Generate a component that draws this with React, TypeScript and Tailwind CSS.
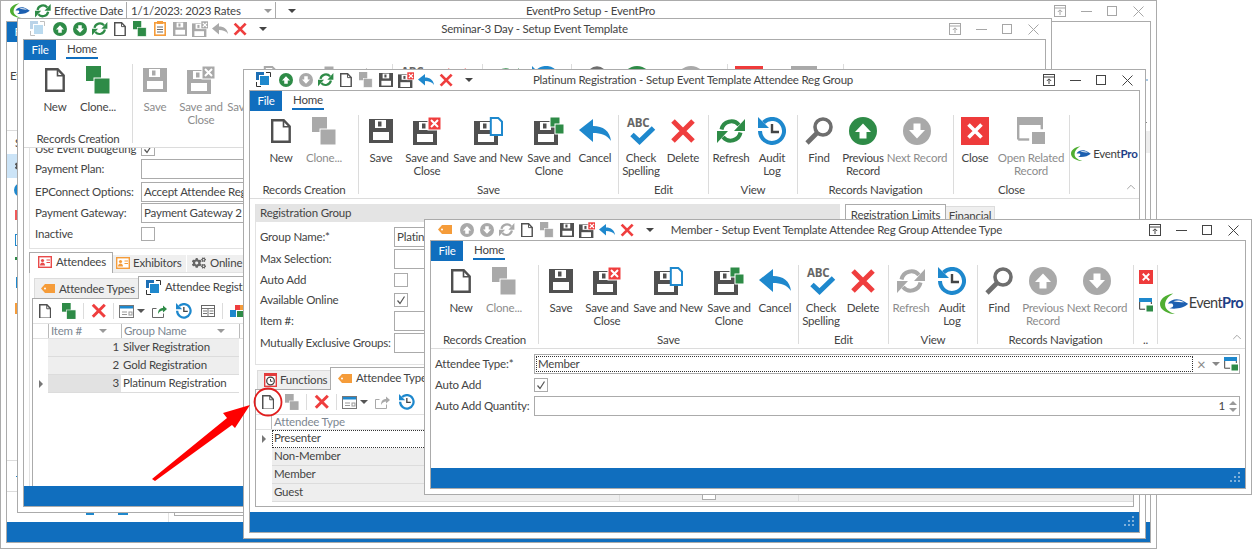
import type { ReactNode } from 'react'
import { FaCogs } from 'react-icons/fa'
import { ChevronUp } from 'lucide-react'

const DARK = '#505050'
const GRAY = '#a9a9a9'
const GREEN = '#2e8b47'
const RED = '#ef3e3e'
const BLUE = '#1e88cd'
const ORANGE = '#f59c3a'

type IconProps = { s?: number; c?: string }

function Svg({ w, h, s = 1, children }: { w: number; h: number; s?: number; children: ReactNode }) {
  return (
    <svg width={w * s} height={h * s} viewBox={`0 0 ${w} ${h}`} className="shrink-0">
      {children}
    </svg>
  )
}

function Doc({ s, c = DARK }: IconProps) {
  return (
    <Svg w={20} h={24} s={s}>
      <path d="M1.2 1.2h11.5l6 6.3v15.3H1.2z" fill="#fff" stroke={c} strokeWidth="2.4" />
      <path d="M12.5 1.2v6.5h6.3" fill="none" stroke={c} strokeWidth="1.6" />
    </Svg>
  )
}

function Clone({ s, c = GREEN }: IconProps) {
  return (
    <Svg w={24} h={28} s={s}>
      <rect x="0" y="0" width="15" height="15" fill={c} />
      <rect x="8" y="12" width="16" height="16" fill={c} stroke="#fff" strokeWidth="1" />
    </Svg>
  )
}

function FloppyG({ c = DARK, x = 0, y = 0 }: { c?: string; x?: number; y?: number }) {
  return (
    <g transform={`translate(${x} ${y})`}>
      <rect width="24" height="24" fill={c} />
      <rect x="6" y="1" width="11" height="8" fill="#fff" />
      <rect x="9" y="2.5" width="3.5" height="5" fill={c} />
      <rect x="4" y="13" width="16" height="8" fill="#fff" />
    </g>
  )
}

function Save({ s, c = DARK }: IconProps) {
  return (
    <Svg w={24} h={24} s={s}>
      <FloppyG c={c} />
    </Svg>
  )
}

function SaveClose({ s, c = DARK, mark = RED }: IconProps & { mark?: string }) {
  return (
    <Svg w={28} h={28} s={s}>
      <FloppyG c={c} y={4} />
      <rect x="15" y="0" width="13" height="13" fill={mark} stroke="#fff" strokeWidth="1" />
      <path d="M18 3l7 7M25 3l-7 7" stroke="#fff" strokeWidth="2" />
    </Svg>
  )
}

function SaveNew({ s, c = DARK, mark = BLUE }: IconProps & { mark?: string }) {
  return (
    <Svg w={29} h={28} s={s}>
      <FloppyG c={c} y={4} />
      <path d="M16.8 1h7.500l3.700 3.700v13.300H16.800z" fill="#fff" stroke={mark} strokeWidth="2" />
    </Svg>
  )
}

function SaveClone({ s, c = DARK, mark = GREEN }: IconProps & { mark?: string }) {
  return (
    <Svg w={30} h={28} s={s}>
      <FloppyG c={c} y={4} />
      <rect x="16" y="0" width="10" height="10" fill={mark} stroke="#fff" strokeWidth="1" />
      <rect x="21" y="7" width="9" height="10" fill={mark} stroke="#fff" strokeWidth="1" />
    </Svg>
  )
}

function Undo({ s, c = BLUE }: IconProps) {
  return (
    <Svg w={32} h={23} s={s}>
      <path d="M0 11 14 0v7c10 0 17 5 18 15-4-6-10-8-18-8v9z" fill={c} />
    </Svg>
  )
}

function Spell() {
  return (
    <Svg w={30} h={29}>
      <text x="1" y="11" fontSize="11.5" fontWeight="700" fill="#666" fontFamily="'Open Sans', sans-serif">
        ABC
      </text>
      <path d="M6 18.500l7.500 7 14-13.500" fill="none" stroke={BLUE} strokeWidth="5" />
    </Svg>
  )
}

function Del({ s, c = RED }: IconProps) {
  return (
    <Svg w={26} h={26} s={s}>
      <path d="M3 3l20 20M23 3L3 23" stroke={c} strokeWidth="5" />
    </Svg>
  )
}

function Refresh({ s, c = GREEN }: IconProps) {
  return (
    <Svg w={28} h={28} s={s}>
      <path d="M4.500 12.500A10 10 0 0 1 22 8" fill="none" stroke={c} strokeWidth="4" />
      <path d="M28 2v12H17z" fill={c} />
      <path d="M23.500 15.500A10 10 0 0 1 6 20" fill="none" stroke={c} strokeWidth="4" />
      <path d="M0 26V14h11z" fill={c} />
    </Svg>
  )
}

function Audit({ s }: IconProps) {
  return (
    <Svg w={28} h={28} s={s}>
      <path d="M5.500 5.500A12 12 0 1 1 2 14" fill="none" stroke={BLUE} strokeWidth="4" />
      <path d="M0 0v11h11z" fill={BLUE} />
      <path d="M14 7v8h7" fill="none" stroke="#444" strokeWidth="2.400" />
    </Svg>
  )
}

function Find() {
  return (
    <Svg w={28} h={28}>
      <circle cx="18" cy="10" r="8" fill="none" stroke="#6e6e6e" strokeWidth="3.600" />
      <path d="M12 16 2 26" stroke="#6e6e6e" strokeWidth="4.600" />
    </Svg>
  )
}

function ArrowUp({ s, c = GREEN }: IconProps) {
  return (
    <Svg w={28} h={28} s={s}>
      <circle cx="14" cy="14" r="14" fill={c} />
      <path d="M14 6.500l8 8.500h-4.500v6.500h-7V15H6z" fill="#fff" />
    </Svg>
  )
}

function ArrowDown({ s, c = GRAY }: IconProps) {
  return (
    <Svg w={28} h={28} s={s}>
      <circle cx="14" cy="14" r="14" fill={c} />
      <path d="M14 21.500 6 13h4.500V6.500h7V13H22z" fill="#fff" />
    </Svg>
  )
}

function CloseBox({ s }: IconProps) {
  return (
    <Svg w={28} h={28} s={s}>
      <rect width="28" height="28" fill="#ee3b3b" />
      <path d="M7.500 7.500l13 13M20.500 7.500l-13 13" stroke="#fff" strokeWidth="3.600" />
    </Svg>
  )
}

function OpenRelated({ s, top = GRAY, mark = GRAY, line = GRAY }: IconProps & { top?: string; mark?: string; line?: string }) {
  return (
    <Svg w={28} h={27} s={s}>
      <path d="M1.200 22.500V1.200h23.600v11" fill="none" stroke={line} strokeWidth="2.400" />
      <path d="M1.200 22.500h11" fill="none" stroke={line} strokeWidth="2.400" />
      <rect x="0" y="0" width="26" height="8" fill={top} />
      <rect x="15" y="15" width="13" height="12" fill={mark} />
    </Svg>
  )
}

function Swoosh({ s = 1 }: { s?: number }) {
  return (
    <Svg w={36} h={28} s={s}>
      <path d="M17 .5C7 2 0 7.500 0 14c0 7 8 12.500 21 13.500C11 24.500 6.500 20 6.500 15 6.500 9.500 10 4.500 17 .5z" fill="#4fae32" />
      <path d="M10 13.500C14 8 23 5.500 31 11l5 3c-5 4.500-15 7.500-24 5.500 4.500-.5 6.500-3.500 3.500-6z" fill="#1c5fb0" />
      <path d="M17 10.500c5-1.500 10-1 14 1.500-5-.5-9-.5-14-1.500z" fill="#fff" />
    </Svg>
  )
}

function Logo({ big }: { big?: boolean }) {
  return big ? (
    <div className="flex items-center">
      <Swoosh s={0.78} />
      <span className="ml-[1px] text-[14.5px] leading-none tracking-[-0.6px] text-[#3d3d3d]">Event</span>
      <span className="text-[14.5px] font-bold leading-none tracking-[-0.4px] text-[#1e3f87]">Pro</span>
    </div>
  ) : (
    <div className="flex items-center">
      <Swoosh s={0.55} />
      <span className="ml-[2px] text-[11.5px] leading-none tracking-[-0.3px] text-[#3d3d3d]">Event</span>
      <span className="text-[11.5px] font-bold leading-none tracking-[-0.2px] text-[#1e3f87]">Pro</span>
    </div>
  )
}

function Caret({ c = '#555' }: { c?: string }) {
  return (
    <svg width="8" height="4" viewBox="0 0 8 4" className="shrink-0">
      <path d="M0 0h8L4 4z" fill={c} />
    </svg>
  )
}

function RegIcon() {
  return (
    <Svg w={15} h={15}>
      <rect x="0" y="0" width="8" height="8" fill="#1d6fb5" />
      <rect x="3.500" y="3.500" width="10" height="10" fill={BLUE} stroke="#fff" />
      <path d="M.5 10v4.500H5M10 .5h4.500V5" fill="none" stroke="#333" />
    </Svg>
  )
}

function Tag({ s = 1 }: { s?: number }) {
  return (
    <Svg w={14} h={9} s={s}>
      <path d="M0 4.500 4 0h10v9H4z" fill={ORANGE} />
      <circle cx="4" cy="4.500" r="1" fill="#fff" />
    </Svg>
  )
}

function Card({ c }: { c: string }) {
  return (
    <Svg w={14} h={12}>
      <rect x=".7" y=".7" width="12.600" height="10.600" fill="#fff" stroke={c} strokeWidth="1.400" />
      <circle cx="4.500" cy="4.500" r="1.600" fill={c} />
      <path d="M2 9.500c0-4 5-4 5 0z" fill={c} />
      <path d="M8.500 4h3.500M8.500 6.500h3.500" stroke={c} />
    </Svg>
  )
}

function CalendarClock() {
  return (
    <Svg w={13} h={14}>
      <rect x=".7" y=".7" width="11.600" height="12.600" fill="#fff" stroke="#e33c3c" strokeWidth="1.400" />
      <rect x="0" y="0" width="13" height="3" fill="#e33c3c" />
      <circle cx="6.500" cy="8" r="3.800" fill="none" stroke="#444" strokeWidth="1.300" />
      <path d="M6.500 6v2.300h2" fill="none" stroke="#444" />
    </Svg>
  )
}

function Clip() {
  return (
    <Svg w={12} h={15}>
      <rect x=".8" y="1.800" width="10.400" height="12.400" fill="#fff" stroke={ORANGE} strokeWidth="1.600" />
      <rect x="3" y="0" width="6" height="3" fill={ORANGE} />
      <path d="M3 6h6M3 8.500h6M3 11h6" stroke="#666" />
    </Svg>
  )
}

function WinIcon() {
  return (
    <Svg w={15} h={13}>
      <rect x=".5" y=".5" width="14" height="12" fill="#fff" stroke="#777" />
      <rect x="1" y="1" width="13" height="2.500" fill={BLUE} />
      <path d="M3 7h5M3 9.500h5" stroke="#999" />
      <rect x="10" y="7" width="3" height="3" fill="none" stroke="#999" />
    </Svg>
  )
}

function Related({ c }: { c: string }) {
  return (
    <Svg w={16} h={14}>
      <path d="M.5 4.500v9h11v-4M.5 4.500h4" fill="none" stroke={GRAY === c ? GRAY : '#666'} />
      <path d="M6 10c0-4 2-6 5-6V1.500l4 3.500-4 3.500V6.500C9 6.500 7 8 6 10z" fill={c} />
    </Svg>
  )
}

function Columns() {
  return (
    <Svg w={14} h={12}>
      <rect x=".5" y=".5" width="13" height="11" fill="#fff" stroke="#666" />
      <path d="M1 3.500h12M7 3.500v8M8.500 6h4M8.500 8.500h4M2 6h4M2 8.500h4" stroke="#777" />
    </Svg>
  )
}

function Tiles() {
  return (
    <Svg w={14} h={12}>
      <rect x="0" y="5" width="6" height="7" fill={BLUE} />
      <rect x="5" y="0" width="5" height="5" fill={RED} />
      <rect x="10" y="0" width="4" height="5" fill={ORANGE} />
      <rect x="7" y="6" width="7" height="6" fill={GREEN} />
    </Svg>
  )
}

function Tick() {
  return (
    <svg width="10" height="10" viewBox="0 0 10 10">
      <path d="M1.500 5.500 4 8.500 8.500 1.500" fill="none" stroke="#555" strokeWidth="1.200" />
    </svg>
  )
}

function CheckBox({ on }: { on?: boolean }) {
  return (
    <div className="flex h-[14px] w-[14px] shrink-0 items-center justify-center border border-[#ababab] bg-white">
      {on && <Tick />}
    </div>
  )
}

function Grip({ c = '#7fb0da' }: { c?: string }) {
  return (
    <svg width="12" height="12" viewBox="0 0 12 12">
      {[
        [9, 0],
        [5, 4],
        [9, 4],
        [1, 8],
        [5, 8],
        [9, 8],
      ].map(([x, y]) => (
        <rect key={`${x}-${y}`} x={x} y={y} width="2" height="2" fill={c} />
      ))}
    </svg>
  )
}

function WinControls({ on }: { on?: boolean }) {
  const c = on ? '#444' : '#a6a6a6'
  return (
    <div className="flex items-center">
      <div className="flex w-[26px] justify-center">
        <svg width="12" height="12" viewBox="0 0 12 12">
          <rect x=".5" y=".5" width="11" height="11" fill="none" stroke={c} />
          <path d="M.5 3h11M6 10V5M3.800 7 6 4.800 8.200 7" fill="none" stroke={c} />
        </svg>
      </div>
      <div className="flex w-[26px] justify-center">
        <div className={on ? 'h-px w-[11px] bg-[#444]' : 'h-px w-[11px] bg-[#a6a6a6]'} />
      </div>
      <div className="flex w-[26px] justify-center">
        <div className={on ? 'h-[10px] w-[10px] border border-[#444]' : 'h-[10px] w-[10px] border border-[#a6a6a6]'} />
      </div>
      <div className="flex w-[26px] justify-center">
        <svg width="11" height="11" viewBox="0 0 11 11">
          <path d="M.5.5l10 10M10.500.5l-10 10" stroke={c} />
        </svg>
      </div>
    </div>
  )
}

function Win({
  box,
  title,
  qat,
  on,
  shift,
  grip,
  children,
}: {
  box: string
  title: string
  qat: ReactNode
  on?: boolean
  shift?: string
  grip?: boolean
  children: ReactNode
}) {
  return (
    <div className={`absolute isolate flex flex-col border border-[#ababab] bg-white px-[5px] pb-[5px] ${box}`}>
      <div className="grid h-[20px] shrink-0 grid-cols-[1fr_auto_1fr] items-center">
        <div className="flex items-center">{qat}</div>
        <div className={shift ?? ''}>{title}</div>
        <div className="flex justify-end">
          <WinControls on={on} />
        </div>
      </div>
      <div className="flex min-h-0 flex-1 flex-col overflow-hidden border border-[#ababab]">
        <div className="flex min-h-0 flex-1 flex-col">{children}</div>
        <div className="flex h-[20px] shrink-0 items-center justify-end bg-[#106ebe] pr-[4px]">{grip && <Grip />}</div>
      </div>
    </div>
  )
}

function Q({ children }: { children: ReactNode }) {
  return <div className="flex w-[20px] shrink-0 items-center justify-center">{children}</div>
}

function QatArrow() {
  return (
    <div className="flex w-[26px] shrink-0 justify-center">
      <Caret c="#444" />
    </div>
  )
}

function TabRow() {
  return (
    <div className="flex h-[20px] shrink-0">
      <div className="flex w-[32px] items-center justify-center bg-[#106ebe] text-white">File</div>
      <div className="ml-[10px] flex h-[19px] flex-col items-center border-b-2 border-[#106ebe] px-[1px] pt-[1px]">Home</div>
    </div>
  )
}

type Btn = { label: string[]; w: string; icon: ReactNode; off?: boolean }

function RibbonBtn({ b }: { b: Btn }) {
  return (
    <div className={`flex shrink-0 flex-col items-center ${b.w}`}>
      <div className="flex h-[31px] items-center justify-center">{b.icon}</div>
      <div className={`mt-[5px] text-center leading-[13px] ${b.off ? 'text-[#8c8c8c]' : ''}`}>
        {b.label.map((t) => (
          <div key={t}>{t}</div>
        ))}
      </div>
    </div>
  )
}

function Group({ box, pad, name, btns }: { box: string; pad: string; name: string; btns: Btn[] }) {
  return (
    <div className={`flex h-[79px] shrink-0 flex-col border-r border-[#dcdcdc] ${box}`}>
      <div className={`flex h-[68px] ${pad}`}>
        {btns.map((b) => (
          <RibbonBtn key={b.label.join()} b={b} />
        ))}
      </div>
      <div className="h-[11px] text-center leading-[14px]">{name}</div>
    </div>
  )
}

function Ribbon({ kind }: { kind: 'seminar' | 'platinum' | 'member' }) {
  const sem = kind === 'seminar'
  const mem = kind === 'member'
  const saveC = sem ? GRAY : DARK
  return (
    <div className="shrink-0">
      <TabRow />
      <div className="flex border-b border-[#dcdcdc] pb-[4px] pt-[4px]">
        <Group
          box={mem ? 'w-[108px]' : 'w-[109px]'}
          pad={mem ? 'pl-[9px]' : 'pl-[10px]'}
          name="Records Creation"
          btns={[
            { label: ['New'], w: 'w-[42px]', icon: <Doc /> },
            { label: ['Clone...'], w: 'w-[44px]', icon: <Clone c={sem ? GREEN : GRAY} />, off: !sem },
          ]}
        />
        <Group
          box="w-[260px]"
          pad=""
          name="Save"
          btns={[
            { label: ['Save'], w: 'w-[44px]', icon: <Save c={saveC} />, off: sem },
            { label: ['Save and', 'Close'], w: 'w-[48px]', icon: <SaveClose c={saveC} mark={sem ? GRAY : RED} />, off: sem },
            { label: ['Save and New'], w: 'w-[74px]', icon: <SaveNew c={saveC} mark={sem ? GRAY : BLUE} />, off: sem },
            { label: ['Save and', 'Clone'], w: 'w-[48px]', icon: <SaveClone c={saveC} mark={sem ? GRAY : GREEN} />, off: sem },
            { label: ['Cancel'], w: 'w-[44px]', icon: <Undo c={sem ? GRAY : BLUE} />, off: sem },
          ]}
        />
        <Group
          box="w-[90px]"
          pad=""
          name="Edit"
          btns={[
            { label: ['Check', 'Spelling'], w: 'w-[44px]', icon: <Spell /> },
            { label: ['Delete'], w: 'w-[40px]', icon: <Del /> },
          ]}
        />
        <Group
          box="w-[89px]"
          pad=""
          name="View"
          btns={[
            { label: ['Refresh'], w: 'w-[44px]', icon: <Refresh c={mem ? GRAY : GREEN} />, off: mem },
            { label: ['Audit', 'Log'], w: 'w-[38px]', icon: <Audit /> },
          ]}
        />
        <Group
          box="w-[156px]"
          pad=""
          name="Records Navigation"
          btns={[
            { label: ['Find'], w: 'w-[42px]', icon: <Find /> },
            { label: ['Previous', 'Record'], w: 'w-[46px]', icon: <ArrowUp c={mem ? GRAY : GREEN} />, off: mem },
            { label: ['Next Record'], w: 'w-[62px]', icon: <ArrowDown />, off: true },
          ]}
        />
        {mem ? (
          <div className="flex h-[79px] w-[24px] shrink-0 flex-col items-center border-r border-[#dcdcdc]">
            <div className="mt-[5px]">
              <CloseBox s={0.5} />
            </div>
            <div className="mt-[14px]">
              <OpenRelated s={0.5} top={BLUE} mark={GREEN} line="#555" />
            </div>
            <div className="mt-auto h-[11px] leading-[14px]">..</div>
          </div>
        ) : (
          <Group
            box="w-[116px]"
            pad=""
            name="Close"
            btns={[
              { label: ['Close'], w: 'w-[42px]', icon: <CloseBox /> },
              { label: ['Open Related', 'Record'], w: 'w-[70px]', icon: <OpenRelated />, off: true },
            ]}
          />
        )}
        <div className="flex h-[79px] min-w-0 flex-1 flex-col">
          <div className="flex flex-1 items-center justify-center pt-[12px]">
            <Logo big={mem} />
          </div>
          <div className="flex justify-end pr-[1px]">
            <ChevronUp size={14} strokeWidth={1.5} color="#999" />
          </div>
        </div>
      </div>
    </div>
  )
}

function Bar() {
  return <div className="h-[16px] w-px shrink-0 bg-[#dcdcdc]" />
}

function SmallToolbar({ rich }: { rich?: boolean }) {
  return (
    <div className="flex h-[24px] shrink-0 items-center">
      <div className="flex w-[24px] justify-center">
        <Doc s={0.62} />
      </div>
      <div className="flex w-[24px] justify-center">
        <Clone s={0.58} c={rich ? GREEN : GRAY} />
      </div>
      <div className="w-[2px]" />
      <Bar />
      <div className="flex w-[29px] justify-center">
        <Del s={0.6} />
      </div>
      <Bar />
      <div className="flex w-[36px] items-center justify-center gap-[3px]">
        <WinIcon />
        <Caret />
      </div>
      <div className="flex w-[19px] justify-center">
        <Related c={rich ? GREEN : GRAY} />
      </div>
      <div className="flex w-[30px] justify-center">
        <Audit s={0.56} />
      </div>
      {rich && (
        <>
          <div className="flex w-[18px] justify-center">
            <Columns />
          </div>
          <div className="w-[5px]" />
          <Bar />
          <div className="flex w-[27px] justify-center">
            <Tiles />
          </div>
        </>
      )}
    </div>
  )
}

function Input({ box, children }: { box: string; children?: ReactNode }) {
  return <div className={`flex shrink-0 items-center border border-[#ababab] bg-white pl-[2px] ${box}`}>{children}</div>
}

function MainWindow() {
  return (
    <Win
      box="left-0 top-0 h-[549px] w-[1157px]"
      title="EventPro Setup - EventPro"
      shift="pl-[24px]"
      qat={
        <>
          <div className="ml-[5px] flex w-[18px] justify-center">
            <Swoosh s={0.55} />
          </div>
          <div className="ml-[6px] flex w-[16px] justify-center">
            <Refresh s={0.56} />
          </div>
          <div className="ml-[3px] w-[72px]">Effective Date</div>
          <div className="flex h-[18px] w-[150px] items-center justify-between border-x border-b border-[#ababab] pl-[4px] pr-[3px]">
            <span>1/1/2023: 2023 Rates</span>
            <Caret c="#999" />
          </div>
          <div className="ml-[12px]">
            <Caret c="#444" />
          </div>
        </>
      }
    >
      <div className="flex min-h-0 flex-1">
        <div className="flex w-[162px] shrink-0 flex-col border-r border-[#e2e2e2]">
          <div className="flex h-[20px] w-[32px] shrink-0 items-center justify-center bg-[#106ebe] text-white">File</div>
          <div className="h-[27px] shrink-0" />
          <div className="h-[14px] shrink-0 pl-[3px] leading-[14px]">Event</div>
          <div className="h-[47px] shrink-0" />
          <div className="h-[24px] shrink-0 border-t border-[#dcdcdc] pl-[8px] leading-[24px]">Setup</div>
          <div className="flex h-[24px] shrink-0 items-center bg-[#cce4f7] pl-[8px]">
            <FaCogs size={14} color="#555" />
          </div>
          <div className="flex h-[24px] shrink-0 items-center pl-[7px]">
            <div className="h-[14px] w-[14px] rounded-full bg-[#1e88cd]" />
          </div>
          <div className="flex h-[25px] shrink-0 items-center pl-[8px]">
            <div className="h-[10px] w-[12px] bg-[#ef5a5a]" />
          </div>
          <div className="flex h-[25px] shrink-0 items-center pl-[8px]">
            <div className="h-[12px] w-[12px] border border-[#1e88cd]" />
          </div>
          <div className="flex h-[12px] shrink-0 items-center pl-[8px]">
            <div className="h-[3px] w-[12px] bg-[#2e8b47]" />
          </div>
          <div className="flex h-[37px] shrink-0 items-center pl-[9px]">
            <div className="h-[11px] w-[3px] bg-[#1e88cd]" />
          </div>
          <div className="flex h-[14px] shrink-0 items-center pl-[8px]">
            <div className="h-[11px] w-[12px] bg-[#f59c3a]" />
          </div>
          <div className="flex-1" />
          <div className="flex h-[31px] shrink-0 items-center border-t border-[#dcdcdc] pl-[9px]">
            <div className="h-px w-[4px] bg-[#1e88cd]" />
          </div>
          <div className="flex h-[31px] shrink-0 items-end gap-[24px] border-t border-[#dcdcdc] pb-[7px] pl-[79px]">
            <div className="h-[2px] w-[8px] bg-[#1e88cd]" />
            <div className="h-[2px] w-[10px] bg-[#1e88cd]" />
          </div>
        </div>
        <div className="flex min-w-0 flex-1 flex-col pb-[6px]">
          <div className="flex-1" />
          <div className="ml-[5px] h-[5px] border-b border-l border-[#ababab]" />
        </div>
        <div className="flex w-[4px] shrink-0 flex-col">
          <div className="h-[57px]" />
          <div className="h-[2px] w-[2px] bg-[#a9c8e4]" />
          <div className="h-[41px]" />
          <div className="h-px w-px bg-[#888]" />
          <div className="h-[8px]" />
          <div className="h-[22px] bg-[#eeeeee]" />
        </div>
      </div>
    </Win>
  )
}

function SeminarWindow() {
  return (
    <Win
      box="left-[17px] top-[18px] h-[495px] w-[1035px]"
      title="Seminar-3 Day - Setup Event Template"
      qat={
        <>
          <div className="ml-[2px] flex w-[25px] shrink-0 justify-center opacity-30">
            <RegIcon />
          </div>
          <Q>
            <ArrowUp s={0.5} />
          </Q>
          <Q>
            <ArrowDown s={0.5} c={GREEN} />
          </Q>
          <Q>
            <Refresh s={0.55} />
          </Q>
          <Q>
            <Doc s={0.6} />
          </Q>
          <Q>
            <Clone s={0.55} />
          </Q>
          <Q>
            <Clip />
          </Q>
          <Q>
            <Save s={0.6} c={GRAY} />
          </Q>
          <Q>
            <SaveClose s={0.6} c={GRAY} mark={GRAY} />
          </Q>
          <Q>
            <Undo s={0.5} c={GRAY} />
          </Q>
          <Q>
            <Del s={0.55} />
          </Q>
          <QatArrow />
        </>
      }
    >
      <Ribbon kind="seminar" />
      <div className="flex min-h-0 flex-1 flex-col px-[5px]">
        <div className="shrink-0 border-b border-l border-[#e2e2e2] pb-[7px] pl-[5px]">
          <div className="flex h-[11px] items-end overflow-hidden">
            <div className="flex h-[20px] shrink-0 items-center">
              <div className="w-[106px]">Use Event Budgeting</div>
              <CheckBox on />
            </div>
          </div>
          <div className="flex h-[20px] items-center">
            <div className="w-[106px]">Payment Plan:</div>
            <Input box="h-[20px] w-[400px]" />
          </div>
          <div className="mt-[3px] flex h-[20px] items-center">
            <div className="w-[106px]">EPConnect Options:</div>
            <Input box="h-[20px] w-[400px]">Accept Attendee Registrations</Input>
          </div>
          <div className="mt-[1px] flex h-[20px] items-center">
            <div className="w-[106px]">Payment Gateway:</div>
            <Input box="h-[20px] w-[400px]">Payment Gateway 2</Input>
          </div>
          <div className="mt-[4px] flex h-[14px] items-center">
            <div className="w-[106px]">Inactive</div>
            <CheckBox />
          </div>
        </div>
        <div className="mt-[3px] flex h-[21px] shrink-0 items-end border-b border-[#e2e2e2]">
          <div className="relative z-10 -mb-px flex h-[21px] w-[84px] shrink-0 items-center gap-[4px] border-x border-t border-[#ababab] bg-white pb-[2px] pl-[8px]">
            <Card c="#e94a4a" />
            Attendees
          </div>
          <div className="flex h-[17px] w-[74px] shrink-0 items-center gap-[3px] border-r border-white bg-[#efefef] pb-[2px] pl-[3px]">
            <Card c={ORANGE} />
            Exhibitors
          </div>
          <div className="flex h-[17px] w-[100px] shrink-0 items-center gap-[4px] bg-[#efefef] pb-[2px] pl-[5px]">
            <FaCogs size={14} color="#666" />
            Online Reg
          </div>
        </div>
        <div className="flex min-h-0 flex-1 flex-col border-l border-[#e2e2e2] pl-[2px]">
          <div className="mt-[3px] flex h-[22px] shrink-0 items-end pl-[2px]">
            <div className="flex h-[20px] w-[104px] shrink-0 items-center gap-[4px] border-l border-t border-[#dcdcdc] bg-[#efefef] pl-[6px]">
              <Tag />
              Attendee Types
            </div>
            <div className="relative z-10 -mb-px flex h-[23px] w-[200px] shrink-0 items-center gap-[4px] border-x border-t border-[#ababab] bg-white pb-[2px] pl-[7px]">
              <RegIcon />
              Attendee Registration Groups
            </div>
          </div>
          <div className="flex min-h-0 flex-1 flex-col border-l border-t border-[#ababab]">
            <SmallToolbar rich />
            <div className="flex h-[16px] shrink-0 items-center border-y border-[#e2e2e2] text-[#7d8791]">
              <div className="w-[15px] shrink-0" />
              <div className="flex h-full w-[73px] shrink-0 items-center justify-between border-l border-[#bbb] pl-[2px] pr-[14px]">
                Item #
                <Caret c="#999" />
              </div>
              <div className="flex h-full w-[118px] shrink-0 items-center justify-between border-l border-[#bbb] pl-[2px] pr-[14px]">
                Group Name
                <Caret c="#999" />
              </div>
              <div className="h-full border-l border-[#bbb] pl-[2px]" />
            </div>
            {[
              ['1', 'Silver Registration'],
              ['2', 'Gold Registration'],
              ['3', 'Platinum Registration'],
            ].map(([n, name], i) => (
              <div key={n} className="flex h-[18px] shrink-0 items-center">
                <div className="flex w-[15px] shrink-0 items-center justify-center">
                  {i === 2 && <div className="h-0 w-0 border-y-[4px] border-l-[4px] border-y-transparent border-l-[#777]" />}
                </div>
                <div
                  className={
                    i === 2
                      ? 'h-[18px] w-[73px] shrink-0 border-b border-[#dcdcdc] bg-[#e2e2e2] pr-[2px] text-right leading-[15px]'
                      : 'h-[18px] w-[73px] shrink-0 border-b border-[#dcdcdc] bg-[#eeeeee] pr-[2px] text-right leading-[15px]'
                  }
                >
                  {n}
                </div>
                <div
                  className={
                    i === 2
                      ? 'h-[18px] w-[118px] shrink-0 border-b border-[#dcdcdc] pl-[2px] leading-[15px]'
                      : 'h-[18px] w-[118px] shrink-0 border-b border-[#dcdcdc] bg-[#eeeeee] pl-[2px] leading-[15px]'
                  }
                >
                  {name}
                </div>
              </div>
            ))}
          </div>
        </div>
      </div>
    </Win>
  )
}

function PlatinumWindow() {
  return (
    <Win
      box="left-[243px] top-[69px] h-[470px] w-[903px]"
      title="Platinum Registration - Setup Event Template Attendee Reg Group"
      shift="pr-[3px]"
      on
      grip
      qat={
        <>
          <div className="ml-[2px] flex w-[25px] shrink-0 justify-center">
            <RegIcon />
          </div>
          <Q>
            <ArrowUp s={0.5} />
          </Q>
          <Q>
            <ArrowDown s={0.5} />
          </Q>
          <Q>
            <Refresh s={0.55} />
          </Q>
          <Q>
            <Doc s={0.6} />
          </Q>
          <Q>
            <Clone s={0.55} c={GRAY} />
          </Q>
          <Q>
            <Save s={0.6} />
          </Q>
          <Q>
            <SaveClose s={0.6} />
          </Q>
          <Q>
            <Undo s={0.5} />
          </Q>
          <Q>
            <Del s={0.55} />
          </Q>
          <QatArrow />
        </>
      }
    >
      <Ribbon kind="platinum" />
      <div className="flex min-h-0 flex-1 flex-col px-[5px]">
        <div className="flex shrink-0 gap-[5px]">
          <div className="mt-[5px] h-[161px] w-[585px] shrink-0 border-b border-l border-[#e2e2e2]">
            <div className="flex h-[18px] items-center bg-[#e4e4e4] pl-[4px]">Registration Group</div>
            <div className="mt-[5px] flex h-[20px] items-center pl-[4px]">
              <div className="w-[134px] shrink-0">Group Name:*</div>
              <Input box="h-[20px] w-[446px]">Platinum Registration</Input>
            </div>
            <div className="mt-[2px] flex h-[20px] items-center pl-[4px]">
              <div className="w-[134px] shrink-0">Max Selection:</div>
              <Input box="h-[20px] w-[446px]" />
            </div>
            <div className="mt-[4px] flex h-[14px] items-center pl-[4px]">
              <div className="w-[134px] shrink-0">Auto Add</div>
              <CheckBox />
            </div>
            <div className="mt-[6px] flex h-[14px] items-center pl-[4px]">
              <div className="w-[134px] shrink-0">Available Online</div>
              <CheckBox on />
            </div>
            <div className="mt-[4px] flex h-[20px] items-center pl-[4px]">
              <div className="w-[134px] shrink-0">Item #:</div>
              <Input box="h-[20px] w-[446px]" />
            </div>
            <div className="mt-[2px] flex h-[20px] items-center pl-[4px]">
              <div className="w-[134px] shrink-0">Mutually Exclusive Groups:</div>
              <Input box="h-[20px] w-[446px]" />
            </div>
          </div>
          <div className="mt-[5px] flex h-[20px] items-end">
            <div className="flex h-[20px] w-[101px] items-center justify-center border-x border-t border-[#ababab] bg-white">
              Registration Limits
            </div>
            <div className="flex h-[18px] w-[49px] items-center justify-center border-r border-t border-[#dcdcdc] bg-[#efefef]">
              Financial
            </div>
          </div>
        </div>
        <div className="mt-[2px] flex h-[22px] shrink-0 items-end pl-[2px]">
          <div className="flex h-[19px] w-[73px] shrink-0 items-center gap-[3px] border-l border-t border-[#dcdcdc] bg-[#efefef] pb-[1px] pl-[6px]">
            <CalendarClock />
            Functions
          </div>
          <div className="relative z-10 -mb-px flex h-[23px] w-[120px] shrink-0 items-center gap-[4px] border-x border-t border-[#ababab] bg-white pb-[2px] pl-[7px]">
            <Tag />
            Attendee Types
          </div>
        </div>
        <div className="flex h-[118px] shrink-0 flex-col border border-[#ababab]">
          <SmallToolbar />
          <div className="flex h-[16px] shrink-0 border-y border-[#e2e2e2] text-[#7d8791]">
            <div className="w-[15px] shrink-0" />
            <div className="flex-1 border-l border-[#bbb] pl-[2px] leading-[14px]">Attendee Type</div>
          </div>
          {['Presenter', 'Non-Member', 'Member', 'Guest'].map((t, i) => (
            <div key={t} className="flex h-[18px] shrink-0 items-center">
              <div className="flex w-[16px] shrink-0 items-center justify-center">
                {i === 0 && <div className="h-0 w-0 border-y-[4px] border-l-[4px] border-y-transparent border-l-[#777]" />}
              </div>
              <div
                className={
                  i === 0
                    ? 'h-[18px] w-[348px] shrink-0 border border-dotted border-[#333] pl-px leading-[14px]'
                    : 'h-[18px] w-[348px] shrink-0 border-b border-r border-[#dcdcdc] bg-[#eeeeee] pl-[2px] leading-[15px]'
                }
              >
                {t}
              </div>
              <div className="flex h-[18px] w-[179px] shrink-0 items-center justify-center border-b border-r border-[#dcdcdc] bg-[#eeeeee]">
                <CheckBox />
              </div>
              <div className="h-[18px] flex-1 border-b border-[#dcdcdc] bg-[#eeeeee]" />
            </div>
          ))}
        </div>
      </div>
    </Win>
  )
}

function MemberWindow() {
  return (
    <Win
      box="left-[424px] top-[219px] h-[276px] w-[828px]"
      title="Member - Setup Event Template Attendee Reg Group Attendee Type"
      shift="pr-[3px]"
      on
      grip
      qat={
        <>
          <div className="ml-[2px] flex w-[25px] shrink-0 justify-center">
            <Tag />
          </div>
          <Q>
            <ArrowUp s={0.5} c={GRAY} />
          </Q>
          <Q>
            <ArrowDown s={0.5} />
          </Q>
          <Q>
            <Refresh s={0.55} c={GRAY} />
          </Q>
          <Q>
            <Doc s={0.6} />
          </Q>
          <Q>
            <Clone s={0.55} c={GRAY} />
          </Q>
          <Q>
            <Save s={0.6} />
          </Q>
          <Q>
            <SaveClose s={0.6} />
          </Q>
          <Q>
            <Undo s={0.5} />
          </Q>
          <Q>
            <Del s={0.55} />
          </Q>
          <QatArrow />
        </>
      }
    >
      <Ribbon kind="member" />
      <div className="flex flex-1 flex-col pl-[4px] pr-[5px] pt-[5px]">
        <div className="flex h-[20px] items-center">
          <div className="w-[99px] shrink-0">Attendee Type:*</div>
          <div className="flex h-[20px] flex-1 items-center border border-[#ababab] p-px">
            <div className="h-[16px] w-[657px] shrink-0 border border-dotted border-[#333] pl-px leading-[14px]">Member</div>
            <div className="ml-[4px] w-[9px] text-[15px] leading-none text-[#888]">×</div>
            <div className="ml-[6px]">
              <Caret c="#888" />
            </div>
            <div className="ml-[4px]">
              <OpenRelated s={0.5} top={BLUE} mark={GREEN} line="#666" />
            </div>
          </div>
        </div>
        <div className="mt-[4px] flex h-[14px] items-center">
          <div className="w-[99px] shrink-0">Auto Add</div>
          <CheckBox on />
        </div>
        <div className="mt-[4px] flex h-[20px] items-center">
          <div className="w-[99px] shrink-0">Auto Add Quantity:</div>
          <div className="flex h-[20px] flex-1 items-center justify-end border border-[#ababab] pr-[2px]">
            1
            <div className="ml-[4px] flex flex-col gap-[3px]">
              <div className="rotate-180">
                <Caret c="#999" />
              </div>
              <Caret c="#999" />
            </div>
          </div>
        </div>
      </div>
    </Win>
  )
}

function Callout() {
  return (
    <svg width="1252" height="549" viewBox="0 0 1252 549" className="pointer-events-none absolute left-0 top-0">
      <circle cx="268" cy="402" r="13.500" fill="none" stroke="#e11d1d" strokeWidth="1.800" />
      <path d="M250 405 223 413 227 418 152 479 155 481 232 425 235 428z" fill="#fe0000" />
    </svg>
  )
}

export default function App() {
  return (
    <div className="relative h-[549px] w-[1252px] overflow-hidden whitespace-nowrap bg-white text-[11.5px] leading-[16px] tracking-[-0.2px] text-[#444] [font-family:Lato,sans-serif]">
      <MainWindow />
      <SeminarWindow />
      <PlatinumWindow />
      <MemberWindow />
      <Callout />
    </div>
  )
}
